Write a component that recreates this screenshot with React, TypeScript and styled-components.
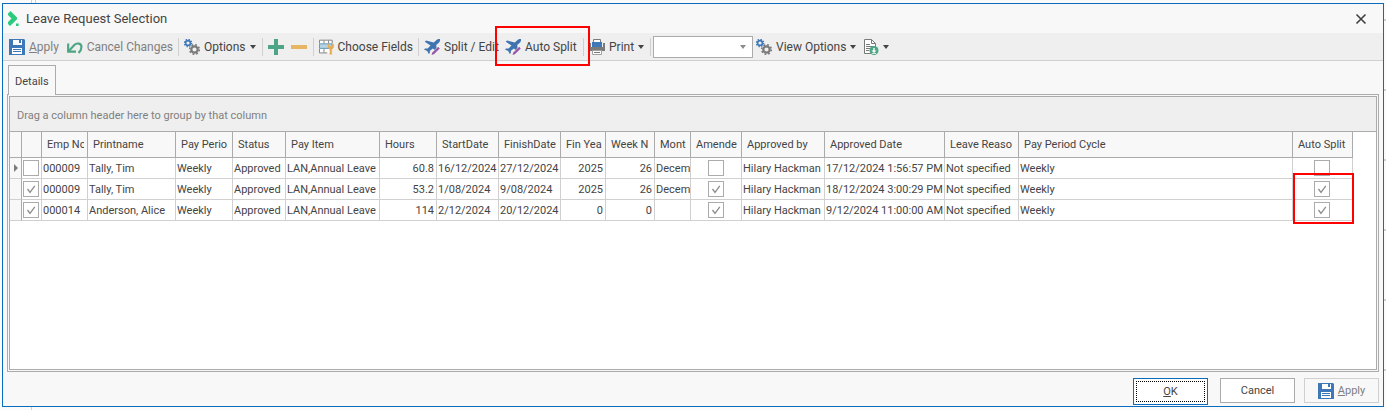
import React from 'react';
import styled, { createGlobalStyle, css } from 'styled-components';

const c = {
  accent: '#0b6cbd',
  surface: '#f8f8f8',
  bar: '#efefef',
  line: '#ababab',
  soft: '#d0d0d0',
  text: '#444444',
  muted: '#7f7f7f',
  mark: '#ff0000',
};

const GlobalStyle = createGlobalStyle`
  * { box-sizing: border-box; }
  body {
    margin: 0;
    color: ${c.text};
    font: 11px/16px Roboto, 'Liberation Sans', sans-serif;
    background-color: #fbfbfb;
    background-image:
      linear-gradient(${c.soft}, ${c.soft}),
      linear-gradient(${c.soft}, ${c.soft}),
      repeating-linear-gradient(transparent 0 19px, ${c.soft} 19px 21px, transparent 21px 70px);
    background-size: 1px 100%, 1px 3px, 3px 100%;
    background-position: 31px 0, 35px 0, right 0;
    background-repeat: no-repeat;
  }
  button, select, input { font: inherit; color: inherit; margin: 0; }
`;

const Page = styled.div`
  display: flex;
  min-height: 100vh;
  padding: 3px 2px 3px 2px;
`;

const Dialog = styled.section`
  display: flex;
  flex: 1;
  min-width: 0;
  flex-direction: column;
  border: 1px solid ${c.accent};
  background: ${c.surface};
`;

const TitleBar = styled.header`
  display: flex;
  align-items: center;
  gap: 7px;
  height: 29px;
  padding: 0 16px 0 5px;
`;

const Title = styled.h1`
  flex: 1;
  margin: 0;
  font-size: 13px;
  font-weight: 400;
  line-height: 20px;
`;

const CloseButton = styled.button`
  display: grid;
  padding: 0;
  border: 0;
  background: none;
`;

const Toolbar = styled.div`
  display: flex;
  align-items: center;
  height: 28px;
  padding-left: 6px;
  border-bottom: 1px solid ${c.soft};
  background: ${c.bar};
  font-size: 12px;
`;

const ToolButton = styled.button<{ $width: number; $marked?: boolean }>`
  position: relative;
  display: flex;
  flex: none;
  align-items: center;
  gap: 4px;
  width: ${p => p.$width}px;
  height: 24px;
  padding: 0;
  border: 0;
  background: none;
  white-space: nowrap;

  &:disabled { color: ${c.muted}; }

  ${p => p.$marked && css`
    background: ${c.bar};
    &::after {
      content: '';
      position: absolute;
      z-index: 1;
      inset: -9px -12px -7px -10px;
      border: 2px solid ${c.mark};
    }
  `}
`;

const Separator = styled.span`
  flex: none;
  width: 1px;
  height: 18px;
  margin: 0 5px;
  background: ${c.soft};
`;

const ComboBox = styled.label`
  display: grid;
  flex: none;
  align-items: center;
  width: 100px;
  height: 22px;
  margin: 0 3px 0 -3px;
  border: 1px solid ${c.line};
  background: #fff;

  & > * { grid-area: 1 / 1; }
  & > svg { justify-self: end; margin-right: 6px; color: #8c8c8c; pointer-events: none; }
`;

const ComboSelect = styled.select`
  width: 100%;
  height: 100%;
  border: 0;
  background: none;
  appearance: none;
`;

const Content = styled.main`
  display: flex;
  flex: 1;
  flex-direction: column;
  padding: 4px 4px 6px;
`;

const TabList = styled.div`
  display: flex;
  padding-left: 1px;
`;

const Tab = styled.button`
  z-index: 1;
  height: 30px;
  margin-bottom: -1px;
  padding: 2px 6px 0;
  border: 1px solid ${c.line};
  border-bottom: 0;
  background: ${c.surface};
`;

const TabPanel = styled.div`
  display: flex;
  flex: 1;
  padding: 1px;
  border: 1px solid ${c.line};
`;

const GridView = styled.div`
  flex: 1;
  min-width: 0;
  overflow: hidden;
  border: 1px solid ${c.line};
  background: #fff;
`;

const GroupPanel = styled.div`
  height: 35px;
  padding: 11px 7px 0;
  border-bottom: 1px solid ${c.line};
  background: ${c.bar};
  color: ${c.muted};
`;

const Table = styled.table`
  table-layout: fixed;
  width: 1343px;
  border-collapse: separate;
  border-spacing: 0;
`;

const Col = styled.col<{ $width: number }>`
  width: ${p => p.$width}px;
`;

const HeadCell = styled.th`
  height: 26px;
  padding: 0 3px 0 5px;
  border-right: 1px solid ${c.line};
  border-bottom: 1px solid ${c.line};
  background: ${c.surface};
  font-weight: 400;
  text-align: left;
`;

const Clip = styled.div`
  overflow: hidden;
  white-space: nowrap;
`;

const CellText = styled(Clip)`
  padding-top: 1px;
`;

const Cell = styled.td<{ $align?: 'right' | 'center' }>`
  position: relative;
  height: 21px;
  padding: 0 ${p => (p.$align ? 2 : 0)}px 0 1px;
  border-right: 1px solid ${c.soft};
  border-bottom: 1px solid ${c.soft};
  text-align: ${p => p.$align ?? 'left'};
`;

const Indicator = styled(Cell)`
  padding: 0 0 0 4px;
  border-right-color: ${c.line};
  background: ${c.surface};
  & > svg { display: block; }
`;

const CheckFrame = styled.label`
  display: inline-grid;
  vertical-align: top;
  & > * { grid-area: 1 / 1; }
`;

const CheckInput = styled.input`
  width: 16px;
  height: 16px;
  border: 1px solid ${c.line};
  background: #fff;
  appearance: none;
  & + svg { visibility: hidden; pointer-events: none; }
  &:checked + svg { visibility: visible; }
`;

const RowsMark = styled.span`
  position: absolute;
  z-index: 1;
  top: -6px;
  left: 0;
  width: 61px;
  height: 51px;
  border: 2px solid ${c.mark};
  pointer-events: none;
`;

const Footer = styled.footer`
  display: flex;
  justify-content: flex-end;
  align-items: flex-start;
  height: 28px;
  padding-right: 4px;
`;

const DialogButton = styled.button`
  display: flex;
  align-items: center;
  justify-content: center;
  gap: 4px;
  width: 75px;
  height: 25px;
  margin-left: 9px;
  padding: 0;
  border: 1px solid ${c.line};
  background: #fff;
  font-size: 11px;

  &:disabled { border-color: ${c.soft}; background: ${c.surface}; color: ${c.muted}; }
`;

const DefaultButton = styled(DialogButton)`
  height: 27px;
  margin-right: 3px;
  padding: 2px;
  border-color: ${c.accent};
`;

const FocusRect = styled.span`
  display: grid;
  place-items: center;
  width: 100%;
  height: 100%;
  border: 1px dotted #000;
`;

const Caret = () => (
  <svg width="6" height="4" viewBox="0 0 6 4" fill="currentColor"><path d="M0 0h6L3 4z" /></svg>
);

const SaveIcon = () => (
  <svg width="16" height="16" viewBox="0 0 16 16" fill="#3f78b8">
    <path d="M0 0h15l1 1v15H0z" />
    <path fill="#fff" d="M4 1h9v5H4zM3 9h10v6H3z" />
    <path d="M10 1h2v3h-2zM4 10h8v1H4zM4 12h8v1H4z" />
  </svg>
);

const UndoIcon = () => (
  <svg width="16" height="16" viewBox="0 0 16 16" fill="none" stroke="#4ca584" strokeWidth="2.200">
    <path d="M1.200 4.500v8.200h8" />
    <path d="M1.500 12.500L7.500 6C10 3.500 14.800 4 14.800 8c0 2.200-1 4.200-3 6" />
  </svg>
);

const GearsIcon = () => (
  <svg width="16" height="16" viewBox="0 0 16 16" fill="none">
    <circle cx="4" cy="4" r="2.400" stroke="#3f78b8" strokeWidth="1.600" />
    <circle cx="4" cy="4" r="3.600" stroke="#3f78b8" strokeWidth="1.400" strokeDasharray="1.414 1.414" />
    <circle cx="10.500" cy="10.500" r="3.200" stroke="#7a7a7a" strokeWidth="2.200" />
    <circle cx="10.500" cy="10.500" r="4.800" stroke="#7a7a7a" strokeWidth="1.600" strokeDasharray="1.885 1.885" />
  </svg>
);

const PlusIcon = () => (
  <svg width="16" height="16" viewBox="0 0 16 16"><path d="M6 0h4v6h6v4h-6v6H6v-6H0V6h6z" fill="#4ca584" /></svg>
);

const MinusIcon = () => (
  <svg width="16" height="16" viewBox="0 0 16 16"><path d="M0 6h16v4H0z" fill="#e8b562" /></svg>
);

const FieldsIcon = () => (
  <svg width="16" height="16" viewBox="0 0 16 16" fill="none">
    <path d="M.5 .5h14v14H.5z" fill="#fff" />
    <path d="M.5 4V.5h14V4M5.500 1v3M10.500 1v3M.5 10v4.500H9M5.500 10v4" stroke="#7a7a7a" />
    <path d="M.5 4.500h14v5H.5z" fill="#b5d5e5" stroke="#5790b5" />
    <path d="M10 5v3.500l2 2V16h2v-5.500l2-2V5h-1.200v2.500h-3.600V5z" fill="#e8ab50" stroke="#e8ab50" strokeWidth=".6" />
  </svg>
);

const PlaneIcon = () => (
  <svg width="16" height="16" viewBox="0 0 16 16">
    <path d="M16 0c-1.600-.3-3 .4-4 1.600L9.800 3.500 2 1.500.8 2.800l5.700 3.700L3.600 9.600 1 9.400 0 10.400l3.200 1.600L4.800 15l1-1 .1-2.200 3-2.300 2.300 2 1.500-2-.5-3.500L14.500 4C15.600 3 16.300 1.600 16 0z" fill="#3f74b0" />
    <path d="M7.500 16l.7-2.800 6-6 2 2-6 6z" fill="#fff" />
    <path d="M7.500 16l.8-2.500 5.900-5.700 1.600 1.600-5.900 5.800z" fill="#9457a5" />
  </svg>
);

const PrinterIcon = () => (
  <svg width="16" height="16" viewBox="0 0 16 16">
    <path d="M0 4h2v4h12V4h2v8H0z" fill="#7a7a7a" />
    <path d="M2 3h12v5H2z" fill="#efefef" />
    <path d="M4.500 .5h7v4h-7z" fill="#fff" stroke="#7a7a7a" />
    <path d="M3 3h10v5H3z" fill="#3f78b8" />
    <path d="M3.500 11.500h9v4h-9z" fill="#fff" stroke="#a0a0a0" />
    <path d="M5 13h6v1H5z" fill="#7a7a7a" />
  </svg>
);

const ExportIcon = () => (
  <svg width="16" height="16" viewBox="0 0 16 16">
    <path d="M1.500 .5h7l4 4v10h-11z" fill="#fff" stroke="#7a7a7a" />
    <path d="M8.500 .5v4h4M3 5.500h4M3 7.500h7M3 9.500h4M3 11.500h3" fill="none" stroke="#7a7a7a" />
    <circle cx="11" cy="11.500" r="4.500" fill="#4ca584" />
    <path d="M10.300 9h1.400v2.500h1.800L11 14l-2.500-2.500h1.800zM8.800 14h4.400v.8H8.800z" fill="#fff" />
  </svg>
);

const LogoIcon = () => (
  <svg width="11" height="15" viewBox="0 0 11 15" fill="#2bcb7d">
    <path d="M0 2.500L2.500 0 9 6.500v1.700L2 15 0 13V11l3.500-3.500L0 4z" /><path d="M8 12.500h2.600V15H8z" />
  </svg>
);

function Check({ label, checked }: { label: string; checked: boolean }) {
  return (
    <CheckFrame>
      <CheckInput type="checkbox" aria-label={label} defaultChecked={checked} />
      <svg width="16" height="16" viewBox="0 0 16 16" fill="none" stroke="#8c8c8c" strokeWidth="1.300">
        <path d="M4.500 8l2.500 3.300L11.800 4.800" />
      </svg>
    </CheckFrame>
  );
}

type Kind = 'text' | 'number' | 'check';
const columns: { title: string; width: number; kind: Kind }[] = [
  { title: '', width: 20, kind: 'check' },
  { title: 'Emp No', width: 46, kind: 'text' },
  { title: 'Printname', width: 88, kind: 'text' },
  { title: 'Pay Perio', width: 57, kind: 'text' },
  { title: 'Status', width: 53, kind: 'text' },
  { title: 'Pay Item', width: 94, kind: 'text' },
  { title: 'Hours', width: 57, kind: 'number' },
  { title: 'StartDate', width: 62, kind: 'text' },
  { title: 'FinishDate', width: 62, kind: 'text' },
  { title: 'Fin Yea', width: 45, kind: 'number' },
  { title: 'Week N', width: 49, kind: 'number' },
  { title: 'Mont', width: 36, kind: 'text' },
  { title: 'Amende', width: 51, kind: 'check' },
  { title: 'Approved by', width: 83, kind: 'text' },
  { title: 'Approved Date', width: 120, kind: 'text' },
  { title: 'Leave Reaso', width: 74, kind: 'text' },
  { title: 'Pay Period Cycle', width: 274, kind: 'text' },
  { title: 'Auto Split', width: 60, kind: 'check' },
];

const rows: (string | boolean)[][] = [
  [false, '000009', 'Tally, Tim', 'Weekly', 'Approved', 'LAN,Annual Leave', '60.8', '16/12/2024', '27/12/2024', '2025', '26', 'Decem', false, 'Hilary Hackman', '17/12/2024 1:56:57 PM', 'Not specified', 'Weekly', false],
  [true, '000009', 'Tally, Tim', 'Weekly', 'Approved', 'LAN,Annual Leave', '53.2', '1/08/2024', '9/08/2024', '2025', '26', 'Decem', true, 'Hilary Hackman', '18/12/2024 3:00:29 PM', 'Not specified', 'Weekly', true],
  [true, '000014', 'Anderson, Alice', 'Weekly', 'Approved', 'LAN,Annual Leave', '114', '2/12/2024', '20/12/2024', '0', '0', '', true, 'Hilary Hackman', '9/12/2024 11:00:00 AM', 'Not specified', 'Weekly', true],
];

const align = { text: undefined, number: 'right', check: 'center' } as const;

export default function App() {
  return (
    <Page>
      <GlobalStyle />
      <Dialog>
        <TitleBar>
          <LogoIcon />
          <Title>Leave Request Selection</Title>
          <CloseButton aria-label="Close">
            <svg width="12" height="12" viewBox="0 0 12 12" stroke="#404040" strokeWidth="1.600"><path d="M1.500 1.500l9 9M10.500 1.500l-9 9" /></svg>
          </CloseButton>
        </TitleBar>
        <Toolbar>
          <ToolButton $width={58} disabled><SaveIcon /><span><u>A</u>pply</span></ToolButton>
          <ToolButton $width={106} disabled><UndoIcon />Cancel Changes</ToolButton>
          <Separator />
          <ToolButton $width={73}><GearsIcon />Options<Caret /></ToolButton>
          <Separator />
          <ToolButton $width={23} aria-label="Add"><PlusIcon /></ToolButton>
          <ToolButton $width={17} aria-label="Remove"><MinusIcon /></ToolButton>
          <Separator />
          <ToolButton $width={94}><FieldsIcon />Choose Fields</ToolButton>
          <Separator />
          <ToolButton $width={81}><PlaneIcon />Split / Edit</ToolButton>
          <ToolButton $width={73} $marked><PlaneIcon />Auto Split</ToolButton>
          <Separator />
          <ToolButton $width={56}><PrinterIcon />Print<Caret /></ToolButton>
          <Separator />
          <ComboBox><ComboSelect aria-label="View" /><Caret /></ComboBox>
          <ToolButton $width={107}><GearsIcon />View Options<Caret /></ToolButton>
          <ToolButton $width={26} aria-label="Export"><ExportIcon /><Caret /></ToolButton>
        </Toolbar>
        <Content>
          <TabList role="tablist"><Tab role="tab" aria-selected="true">Details</Tab></TabList>
          <TabPanel role="tabpanel">
            <GridView>
              <GroupPanel>Drag a column header here to group by that column</GroupPanel>
              <Table>
                <colgroup>
                  <Col $width={12} />
                  {columns.map((col, i) => <Col key={i} $width={col.width} />)}
                </colgroup>
                <thead>
                  <tr>
                    <HeadCell />
                    {columns.map((col, i) => <HeadCell key={i}><Clip>{col.title}</Clip></HeadCell>)}
                  </tr>
                </thead>
                <tbody>
                  {rows.map((row, r) => (
                    <tr key={r}>
                      <Indicator>
                        {r === 0 && <svg width="5" height="8" viewBox="0 0 5 8" fill="#7b7b7b"><path d="M0 0l4 4-4 4z" /></svg>}
                      </Indicator>
                      {row.map((value, i) => (
                        <Cell key={i} $align={align[columns[i].kind]}>
                          {typeof value === 'boolean'
                            ? <Check label={columns[i].title || 'Select row'} checked={value} />
                            : <CellText>{value}</CellText>}
                          {r === 1 && i === row.length - 1 && <RowsMark />}
                        </Cell>
                      ))}
                    </tr>
                  ))}
                </tbody>
              </Table>
            </GridView>
          </TabPanel>
        </Content>
        <Footer>
          <DefaultButton><FocusRect><span><u>O</u>K</span></FocusRect></DefaultButton>
          <DialogButton>Cancel</DialogButton>
          <DialogButton disabled><SaveIcon /><span><u>A</u>pply</span></DialogButton>
        </Footer>
      </Dialog>
    </Page>
  );
}
